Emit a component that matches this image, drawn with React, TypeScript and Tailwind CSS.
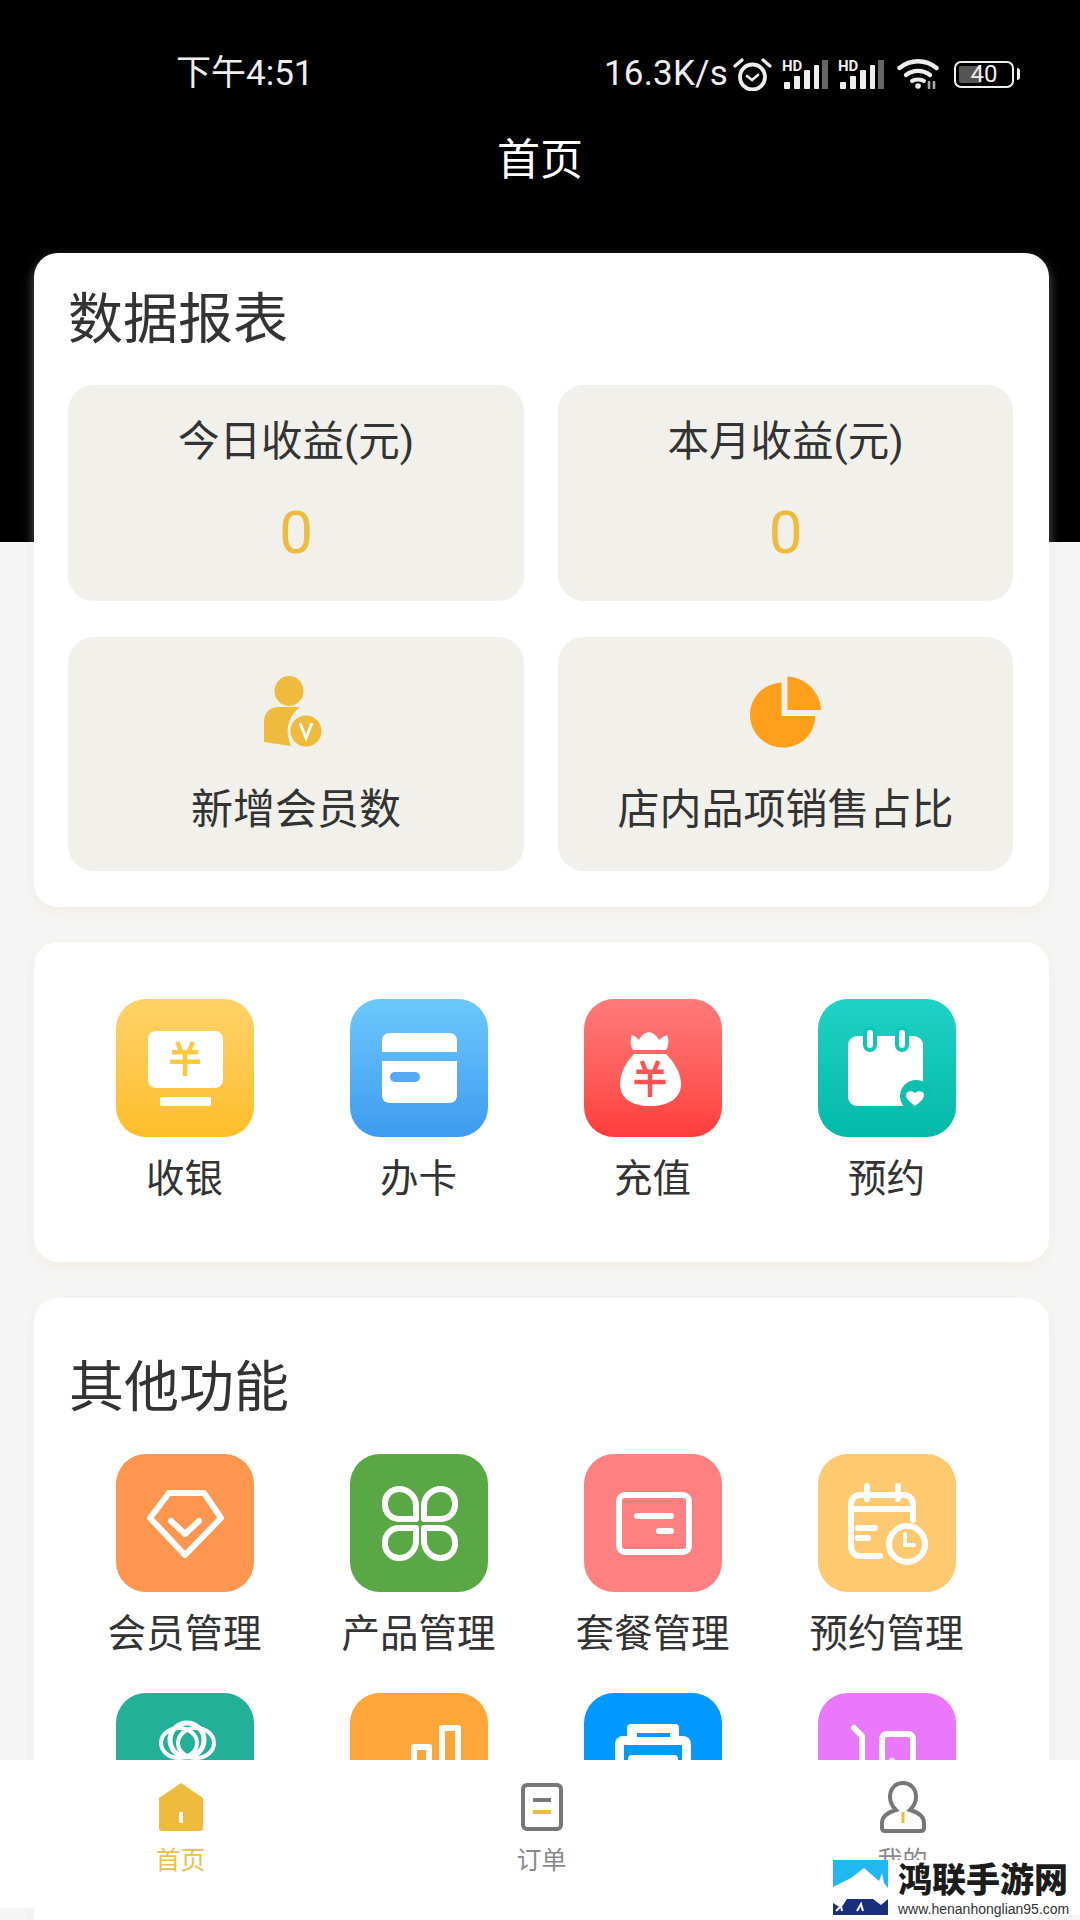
import type { ReactNode } from "react";

// 状态栏的信号格
function Signal() {
  return (
    <svg className="overflow-visible" width="46" height="29" viewBox="0 0 46 29" fill="#eee">
      <text x="0" y="11" fontSize="15" fontWeight="700" fontFamily="Roboto, sans-serif">
        HD
      </text>
      <rect x="2" y="22" width="6" height="7" rx="1" />
      <rect x="12" y="16" width="6" height="13" rx="1" />
      <rect x="22" y="10" width="6" height="19" rx="1" />
      <rect x="32" y="5" width="5" height="24" rx="1" />
      <rect x="40" y="0" width="6" height="29" fill="#666" />
    </svg>
  );
}

function StatusBar() {
  return (
    <div className="flex h-[100px] items-end pl-[176px] pr-[60px] pb-[6px] text-[#eeeeee]">
      <span className="text-[35px] leading-[40px]">下午4:51</span>
      <div className="ml-auto flex items-center">
        <span className="text-[35px] leading-[40px] tracking-[0.2px]">16.3K/s</span>
        <svg className="ml-[5px]" width="39" height="34" viewBox="0 0 39 34" fill="none" stroke="#eee" strokeLinecap="round">
          <circle cx="19.5" cy="20" r="12.5" strokeWidth="3.8" />
          <path d="M14 19l5 4 6-5" strokeWidth="2.6" />
          <path d="M2 9l7-6M37 9l-7-6" strokeWidth="3.2" />
        </svg>
        <div className="ml-[10px]">
          <Signal />
        </div>
        <div className="ml-[10px]">
          <Signal />
        </div>
        <svg className="ml-[13px]" width="42" height="30" viewBox="0 0 42 30" fill="none" stroke="#eee" strokeLinecap="round">
          <path d="M2.500 9c11-9 26-9 37 0" strokeWidth="4.4" />
          <path d="M9 16c7-5.500 17-5.500 24 0" strokeWidth="4.4" />
          <path d="M15 22c3-2 9-2 12 0" strokeWidth="4" />
          <circle cx="21" cy="27" r="2.800" fill="#eee" stroke="none" />
          <path d="M32 23v6M37 23v6" strokeWidth="2.600" stroke="#aaa" />
        </svg>
        <div className="relative ml-[15px] flex h-[27px] w-[60px] items-center rounded-[7px] border-2 border-[#eee] p-[3px]">
          <div className="h-full w-[22px] rounded-[2px] bg-[#555]" />
          <span className="absolute inset-0 flex items-center justify-center text-[24px] leading-none text-[#eee]">40</span>
        </div>
        <div className="ml-[3px] h-[12px] w-[3px] rounded-r bg-[#eee]" />
      </div>
    </div>
  );
}

function Card({ className, children }: { className: string; children: ReactNode }) {
  return (
    <div className={`mx-[34px] w-[1015px] rounded-[24px] bg-white shadow-[0_5px_12px_rgba(240,228,200,0.4)] ${className}`}>
      {children}
    </div>
  );
}

function AppIcon({ bg, children }: { bg: string; children: ReactNode }) {
  return (
    <div className={`h-[138px] w-[138px] rounded-[30px] ${bg}`}>
      <svg width="138" height="138" viewBox="0 0 138 138">
        {children}
      </svg>
    </div>
  );
}

function yuan(color: string, cx: number, top: number, h: number) {
  const w = h * 0.38;
  return (
    <g stroke={color} strokeWidth="4.500" fill="none">
      <path d={`M${cx} ${top + h * 0.28}V${top + h}`} />
      <path d={`M${cx - w} ${top + h * 0.3}H${cx + w}M${cx - w - 2} ${top + h * 0.58}H${cx + w + 2}`} />
      <path d={`M${cx - w * 0.6} ${top}L${cx - w * 0.3} ${top + h * 0.28}M${cx + w * 0.6} ${top}L${cx + w * 0.3} ${top + h * 0.28}`} />
    </g>
  );
}

const stroke = { fill: "none", stroke: "#fff", strokeWidth: 6, strokeLinecap: "round", strokeLinejoin: "round" } as const;

function Item({ icon, label }: { icon: ReactNode; label: string }) {
  return (
    <div className="flex flex-col items-center">
      {icon}
      <span className="mt-[17px] text-[38.5px] leading-[50px] text-[#333]">{label}</span>
    </div>
  );
}

function AppIconCenter({ children }: { children: ReactNode }) {
  return <div className="flex justify-center">{children}</div>;
}

function NavItem({ icon, label, active }: { icon: ReactNode; label: string; active?: boolean }) {
  return (
    <div className="flex flex-col items-center">
      <div className="flex h-[52px] items-center">{icon}</div>
      <span className={`mt-[12px] text-[25px] leading-[32px] ${active ? "text-[#ecc04b]" : "text-[#8a8a8a]"}`}>{label}</span>
    </div>
  );
}

export default function App() {
  return (
    <div className="relative h-[1920px] w-[1080px] overflow-hidden bg-[#f5f5f5] font-['Roboto','Noto_Sans_CJK_SC',sans-serif]">
      <div className="absolute inset-x-0 top-0 h-[542px] bg-black" />

      <div className="relative">
        <StatusBar />
        <h1 className="mt-[32px] text-center text-[43px] leading-[56px] font-normal text-white">首页</h1>
        <div className="h-[65px]" />

        {/* 数据报表 */}
        <Card className="px-[34px] pt-[31px] pb-[36px]">
          <h2 className="text-[55px] leading-[70px] font-normal text-[#333]">数据报表</h2>
          <div className="mt-[31px] grid grid-cols-[456px_455px] gap-x-[34px] gap-y-[36px]">
            {["今日收益(元)", "本月收益(元)"].map((t) => (
              <div key={t} className="flex h-[216px] flex-col items-center rounded-[26px] bg-[#f1f0eb] pt-[29px]">
                <span className="text-[41.5px] leading-[56px] text-[#333]">{t}</span>
                <span className="mt-[28px] text-[60px] leading-[70px] text-[#efbb3c]">0</span>
              </div>
            ))}
            <div className="flex h-[234px] flex-col items-center rounded-[26px] bg-[#f1f0eb] pt-[39px]">
              <svg className="-translate-x-[2px]" width="60" height="72" viewBox="0 0 60 72">
                <ellipse cx="25" cy="15" rx="14.500" ry="15" fill="#efbb3c" />
                <path d="M0 66V46c0-10 6-15 16-15h20c-8 6-12 14-12 24 0 6 1 11 3 15z" fill="#efbb3c" />
                <circle cx="42" cy="55" r="17" fill="#efbb3c" stroke="#f1f0eb" strokeWidth="3" />
                <path d="M36 47l6 15 6-15" fill="none" stroke="#fff" strokeWidth="3" />
              </svg>
              <span className="mt-[33px] text-[42px] leading-[58px] text-[#333]">新增会员数</span>
            </div>
            <div className="flex h-[234px] flex-col items-center rounded-[26px] bg-[#f1f0eb] pt-[39px]">
              <svg width="71" height="72" viewBox="0 0 72 72" fill="#ff9f1c">
                <path d="M32 6v34h34c0 18-14 32-33 32C15 72 0 57 0 39 0 21 14 7 32 6z" />
                <path d="M38 0c18 1 33 15 34 34H38z" />
              </svg>
              <span className="mt-[33px] text-[42px] leading-[58px] text-[#333]">店内品项销售占比</span>
            </div>
          </div>
        </Card>

        {/* 常用入口 */}
        <Card className="mt-[35px] h-[320px] pt-[57px] pl-[33.5px]">
          <div className="grid grid-cols-[repeat(4,234px)]">
            <Item
              label="收银"
              icon={
                <AppIcon bg="bg-gradient-to-b from-[#ffd266] to-[#ffbe26]">
                  <rect x="32" y="32" width="75" height="57" rx="8" fill="#fff" />
                  <rect x="44" y="98" width="51" height="9" rx="2" fill="#fff" />
                  {yuan("#ffc83f", 69, 43, 34)}
                </AppIcon>
              }
            />
            <Item
              label="办卡"
              icon={
                <AppIcon bg="bg-gradient-to-b from-[#6dc8fb] to-[#3d9bf0]">
                  <path d="M32 53V42c0-5 3-8 8-8h59c5 0 8 3 8 8v11z" fill="#fff" />
                  <path d="M32 62h75v34c0 5-3 8-8 8H40c-5 0-8-3-8-8z" fill="#fff" />
                  <rect x="40" y="73" width="30" height="10" rx="5" fill="#56a9f2" />
                </AppIcon>
              }
            />
            <Item
              label="充值"
              icon={
                <AppIcon bg="bg-gradient-to-b from-[#ff7a7a] to-[#ff3c3c]">
                  <path d="M49 51c-3-5-3-10-1-15 3 1 5 3 7 5 2-4 5-7 10-8 5 1 8 4 10 8 2-2 5-4 8-5 2 5 2 10-1 15z" fill="#fff" />
                  <path d="M50 55h32c8 8 15 19 15 30 0 14-12 22-31 22s-30-8-30-22c0-11 6-22 14-30z" fill="#fff" />
                  {yuan("#ff5252", 66, 62, 36)}
                </AppIcon>
              }
            />
            <Item
              label="预约"
              icon={
                <AppIcon bg="bg-gradient-to-b from-[#1dd3c5] to-[#02b9a8]">
                  <rect x="30" y="37" width="75" height="70" rx="9" fill="#fff" />
                  <rect x="47" y="29" width="10" height="22" rx="5" fill="#fff" stroke="#10c6b6" strokeWidth="4" />
                  <rect x="79" y="29" width="10" height="22" rx="5" fill="#fff" stroke="#10c6b6" strokeWidth="4" />
                  <circle cx="98" cy="97" r="16" fill="#0cc0b0" />
                  <path d="M97 107c-5-4-9-7-9-11 0-4 6-5 9-2 3-3 9-2 9 2 0 4-4 7-9 11z" fill="#fff" />
                </AppIcon>
              }
            />
          </div>
        </Card>

        {/* 其他功能 */}
        <Card className="mt-[36px] h-[700px] pt-[54px]">
          <h2 className="pl-[35px] text-[55px] leading-[70px] font-normal text-[#333]">其他功能</h2>
          <div className="mt-[32px] grid grid-cols-[repeat(4,234px)] gap-y-[34px] pl-[33.5px]">
            <Item
              label="会员管理"
              icon={
                <AppIcon bg="bg-[#ff9650]">
                  <path d="M53 39h35l17 25-36 37-35-37z" {...stroke} />
                  <path d="M55 67l14 13 14-13" {...stroke} />
                </AppIcon>
              }
            />
            <Item
              label="产品管理"
              icon={
                <AppIcon bg="bg-[#5aa845]">
                  <path d="M66 65H48a14 14 0 0 1-13-14V48a14 14 0 0 1 14-13 17 17 0 0 1 17 17z" {...stroke} />
                  <path d="M74 65h18a14 14 0 0 0 13-14V48a14 14 0 0 0-14-13 17 17 0 0 0-17 17z" {...stroke} />
                  <path d="M66 74H48a14 14 0 0 0-13 14v3a14 14 0 0 0 14 13 17 17 0 0 0 17-17z" {...stroke} />
                  <path d="M74 74h18a14 14 0 0 1 13 14v3a14 14 0 0 1-14 13 17 17 0 0 1-17-17z" {...stroke} />
                </AppIcon>
              }
            />
            <Item
              label="套餐管理"
              icon={
                <AppIcon bg="bg-[#ff8080]">
                  <rect x="35" y="41" width="70" height="57" rx="6" {...stroke} />
                  <path d="M53 62h34M75 77h12" {...stroke} />
                </AppIcon>
              }
            />
            <Item
              label="预约管理"
              icon={
                <AppIcon bg="bg-[#ffc970]">
                  <path d="M62 102H42a9 9 0 0 1-9-9V50a9 9 0 0 1 9-9h44a9 9 0 0 1 9 9v16" {...stroke} />
                  <path d="M49 32v13M80 32v13M33 55h62M40 74h17M40 84h10" {...stroke} />
                  <circle cx="89" cy="90" r="18" {...stroke} />
                  <path d="M87 80v11h9" {...stroke} strokeWidth={4} />
                </AppIcon>
              }
            />
            <AppIconCenter>
              <AppIcon bg="bg-[#23b098]">
                <circle cx="71" cy="47" r="17" {...stroke} strokeWidth={5} />
                <ellipse cx="63" cy="50" rx="18" ry="15" {...stroke} strokeWidth={4} />
                <ellipse cx="80" cy="50" rx="18" ry="15" {...stroke} strokeWidth={4} />
              </AppIcon>
            </AppIconCenter>
            <AppIconCenter>
              <AppIcon bg="bg-[#ffa63a]">
                <path d="M92 100V35h16v65M64 100V54h15v46" {...stroke} />
              </AppIcon>
            </AppIconCenter>
            <AppIconCenter>
              <AppIcon bg="bg-[#0099ff]">
                <rect x="43" y="31" width="52" height="30" rx="4" fill="#fff" />
                <rect x="31" y="43" width="76" height="60" rx="8" fill="#fff" />
                <rect x="53" y="40" width="33" height="4" fill="#0099ff" />
                <rect x="40" y="52" width="58" height="45" fill="#0099ff" />
                <rect x="44" y="62" width="50" height="35" rx="4" fill="#fff" />
              </AppIcon>
            </AppIconCenter>
            <AppIconCenter>
              <AppIcon bg="bg-[#ea78fb]">
                <path d="M36 35l8 8v52" {...stroke} />
                <rect x="64" y="41" width="31" height="52" rx="5" {...stroke} />
                <circle cx="74" cy="68" r="3" fill="#fff" />
              </AppIcon>
            </AppIconCenter>
          </div>
        </Card>
      </div>

      {/* 底部导航 */}
      <div className="absolute top-[1760px] right-[-3px] left-0 grid h-[148px] grid-cols-3 bg-white pt-[21px]">
        <NavItem
          active
          label="首页"
          icon={
            <svg width="44" height="48" viewBox="0 0 44 48">
              <path d="M22 0l22 15v30a3 3 0 0 1-3 3H3a3 3 0 0 1-3-3V15z" fill="#efbb3c" />
              <rect x="20" y="29" width="4" height="11" fill="#fff" />
            </svg>
          }
        />
        <NavItem
          label="订单"
          icon={
            <svg width="42" height="48" viewBox="0 0 42 48" fill="none">
              <rect x="2" y="2" width="38" height="44" rx="4" stroke="#777" strokeWidth="4" />
              <path d="M12 17h18" stroke="#777" strokeWidth="4" />
              <path d="M12 29h18" stroke="#efbb3c" strokeWidth="4" />
            </svg>
          }
        />
        <NavItem
          label="我的"
          icon={
            <svg width="46" height="52" viewBox="0 0 46 52" fill="none">
              <path d="M23 2c8 0 13 6 13 14 0 6-3 10-6 13 7 2 14 6 14 13v5c0 2-1 3-3 3H5c-2 0-3-1-3-3v-5c0-7 7-11 14-13-3-3-6-7-6-13 0-8 5-14 13-14z" stroke="#777" strokeWidth="4" />
              <path d="M23 31v11" stroke="#efbb3c" strokeWidth="3" />
            </svg>
          }
        />
      </div>

      {/* 水印 */}
      <div className="absolute top-[1860px] left-[833px] flex h-[55px] w-[247px] items-start bg-white">
        <svg className="shrink-0" width="55" height="55" viewBox="0 0 55 55">
          <rect width="55" height="55" fill="#1fb8f0" />
          <rect y="37" width="55" height="18" fill="#1a2f7c" />
          <path d="M0 27l18-9 13-10 15 13 3-8 2 10 4 5v11l-7 6-8-6H14l-6 9-8-5z" fill="#fff" />
          <path d="M3 51l5-5 1 5M24 51l4-7 2 7" stroke="#fff" strokeWidth="2" fill="none" />
        </svg>
        <div className="ml-[10px] flex flex-col">
          <span className="mt-[1px] text-[34px] leading-[38px] font-black text-[#1c1c1c]">鸿联手游网</span>
          <span className="mt-[3px] font-['Liberation_Sans',sans-serif] text-[14px] leading-[14px] text-[#333]">www.henanhonglian95.com</span>
        </div>
      </div>
    </div>
  );
}
